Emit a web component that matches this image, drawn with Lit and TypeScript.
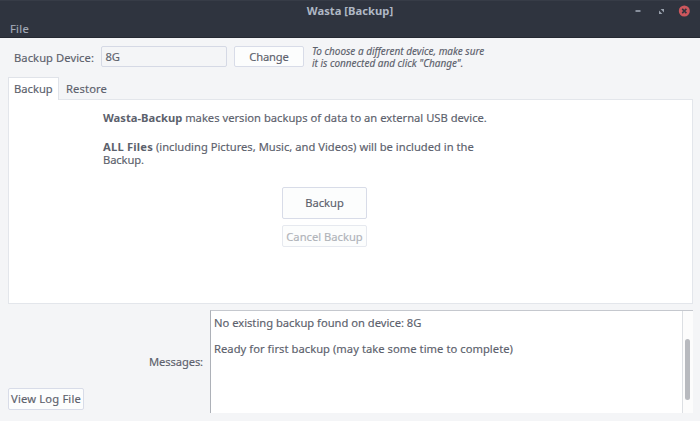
import { LitElement, html, css } from "lit";

class AppRoot extends LitElement {
  static styles = css`
    :host {
      display: flex;
      flex-direction: column;
      box-sizing: border-box;
      width: 700px;
      height: 421px;
      overflow: hidden;
      background: #f4f5f7;
      color: #5c616c;
      font: 11.2px/13px "Noto Sans", sans-serif;
      -webkit-text-stroke: 0.15px currentColor;
      white-space: nowrap;
    }
    * { box-sizing: border-box; }
    header {
      height: 38px;
      flex: none;
      background: #2f343f;
      border-top: 1px solid #373c47;
      border-bottom: 1px solid #252932;
      color: #afb8c5;
    }
    .titlebar {
      display: grid;
      grid-template-columns: 1fr auto 1fr;
      align-items: center;
      height: 19px;
    }
    .title { grid-column: 2; font-weight: 700; letter-spacing: 0.03px; -webkit-text-stroke: 0; }
    .controls { justify-self: end; display: block; }
    .menu { padding: 2px 10px 0; letter-spacing: 0.27px; color: #a4acb9; }
    .device {
      display: flex;
      height: 39px;
      padding: 8px 0 0 14px;
      flex: none;
    }
    .label { width: 87px; padding-top: 5px; letter-spacing: 0.06px; }
    .field {
      width: 126px;
      height: 21px;
      padding: 3px 0 0 3.5px;
      border: 1px solid #d5d9e5;
      border-radius: 2px;
      letter-spacing: -0.2px;
    }
    button {
      display: flex;
      align-items: center;
      justify-content: center;
      height: 22px;
      padding: 0;
      border: 1px solid #d8dce8;
      border-radius: 2px;
      background: #fcfdfd;
      color: inherit;
      font: inherit;
    }
    .change { width: 70px; height: 21px; margin: 0 8px 0 7px; letter-spacing: -0.13px; }
    .hint { margin-top: -1px; font-size: 9.98px; line-height: 12px; font-style: italic; }
    .tabs { display: flex; height: 22px; margin-left: 8px; flex: none; }
    .tab { padding: 5px 7px 0; letter-spacing: 0.12px; }
    .tab.active {
      position: relative;
      width: 51px;
      height: 23px;
      padding: 4px 0 0 5px;
      border: 1px solid #e0e3e9;
      border-bottom: 0;
      background: #fff;
      letter-spacing: 0;
    }
    .panel {
      display: flex;
      flex-direction: column;
      width: 685px;
      height: 205px;
      margin: 0 0 0 8px;
      padding: 11px 0 0 94px;
      flex: none;
      border: 1px solid #e3e6eb;
      background: #fff;
    }
    .copy { height: 71px; line-height: 13px; }
    .copy p { margin: 0; height: 13px; }
    .copy .gap { margin-top: 16px; }
    b { font-weight: 700; -webkit-text-stroke: 0; }
    .wide { letter-spacing: 0.19px; }
    .tighter { letter-spacing: -0.1px; }
    .actions { display: flex; flex-direction: column; gap: 6px; margin: 5px 0 0 179px; width: 85px; }
    .actions .run { height: 32px; padding-bottom: 2px; }
    .actions .cancel { border-color: #e6e9ef; color: #b0b3b9; }
    .bottom {
      display: flex;
      height: 103px;
      margin: 6px 7px 0 8px;
      flex: none;
    }
    .side { display: flex; flex-direction: column; justify-content: flex-end; width: 202px; padding-bottom: 3px; }
    .messages { align-self: flex-end; margin: 0 7px 20px 0; letter-spacing: -0.12px; }
    .log { width: 76px; padding-bottom: 1px; letter-spacing: 0.17px; }
    .output {
      display: flex;
      flex: 1;
      border-top: 1px solid #c5c8ce;
      border-left: 1px solid #adb1b8;
      background: #fff;
    }
    .text { flex: 1; padding: 5px 0 0 3px; }
    .text p { margin: 0; height: 26px; letter-spacing: -0.01px; }
    .text p + p { letter-spacing: 0.04px; }
    .scroll { width: 11px; border-left: 1px solid #dcdfe3; background: #fcfcfc; padding: 28px 0 0 2px; }
    .thumb { width: 5px; height: 61px; border-radius: 3px; background: #b8babf; }
  `;

  render() {
    return html`
      <header>
        <div class="titlebar">
          <div class="title">Wasta [Backup]</div>
          <svg class="controls" width="70" height="18" viewBox="0 0 70 18">
            <path d="M5.5 9H10.5" stroke="#afb8c5" stroke-width="1.4" />
            <path d="M30.6 7H34V10.4ZM29 8.6V12H32.4Z" fill="#99a1ad" />
            <circle cx="54.3" cy="9" r="5.5" fill="#cc575d" />
            <path d="M52.2 6.9L56.4 11.1M56.4 6.9L52.2 11.1" stroke="#2f343f" stroke-width="1.6" />
          </svg>
        </div>
        <div class="menu">File</div>
      </header>
      <div class="device">
        <div class="label">Backup Device:</div>
        <div class="field">8G</div>
        <button class="change">Change</button>
        <div class="hint">
          <div>To choose a different device, make sure</div>
          <div>it is connected and click "Change".</div>
        </div>
      </div>
      <div class="tabs">
        <div class="tab active">Backup</div>
        <div class="tab">Restore</div>
      </div>
      <div class="panel">
        <div class="copy">
          <p><b>Wasta-Backup</b> makes version backups of data to an external USB device.</p>
          <p class="gap"><b class="wide">ALL Files</b> (including Pictures, Music, and Videos) will be included in the</p>
          <p class="tighter">Backup.</p>
        </div>
        <div class="actions">
          <button class="run">Backup</button>
          <button class="cancel">Cancel Backup</button>
        </div>
      </div>
      <div class="bottom">
        <div class="side">
          <div class="messages">Messages:</div>
          <button class="log">View Log File</button>
        </div>
        <div class="output">
          <div class="text">
            <p>No existing backup found on device: 8G</p>
            <p>Ready for first backup (may take some time to complete)</p>
          </div>
          <div class="scroll"><div class="thumb"></div></div>
        </div>
      </div>
    `;
  }
}
customElements.define("app-root", AppRoot);
